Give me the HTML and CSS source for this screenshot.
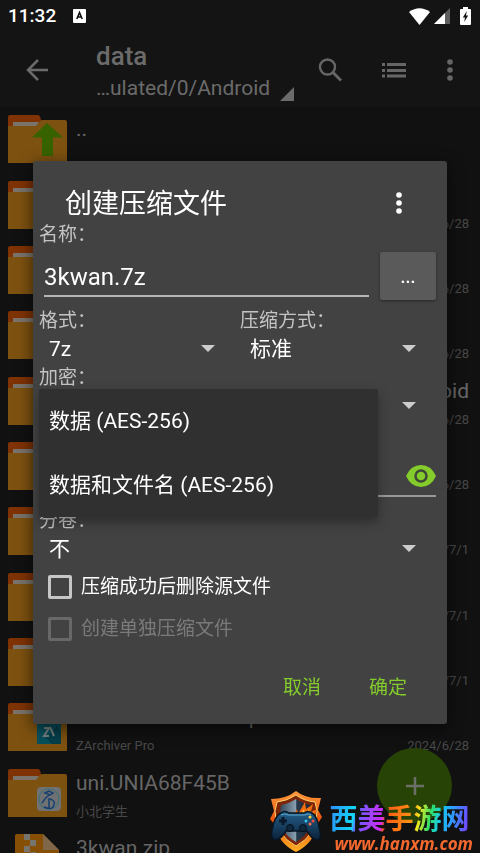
FILE: index.html
```html
<!DOCTYPE html>
<html lang="zh-CN">
<head>
  <meta charset="UTF-8">
  <meta name="viewport" content="width=device-width, initial-scale=1.0">
  <title>ZArchiver</title>
  <link rel="stylesheet" href="styles.css">
</head>
<body>

<!-- shared icon shapes -->
<svg class="defs" width="0" height="0" aria-hidden="true">
  <symbol id="folder" viewBox="0 0 59 48">
    <path d="M0 14V2a2 2 0 0 1 2-2h28q2 0 3 5l1 9z" fill="#7f3204"/>
    <path d="M5 7h26l-3 5H5z" fill="#79736b"/>
    <path d="M0 11h27q2 0 3-2l2-3q1-1 3-1h22a2 2 0 0 1 2 2v41H0z" fill="#7d5110"/>
  </symbol>
  <symbol id="dots" viewBox="0 0 6 22">
    <circle cx="3" cy="3" r="2.8"/><circle cx="3" cy="11" r="2.8"/><circle cx="3" cy="19" r="2.8"/>
  </symbol>
</svg>

<div class="screen">
  <div class="status-bar">
    <span class="clock">11:32</span>
    <svg class="badge-a" width="13" height="14" viewBox="0 0 13 14">
      <rect width="13" height="14" rx="1" fill="#fff"/>
      <path d="M3.8 10 6.5 3.6 9.2 10M4.8 8h3.4" fill="none" stroke="#111" stroke-width="1.6"/>
    </svg>
    <span class="status-icons">
      <svg width="21" height="17" viewBox="0 0 21 17"><path d="M0 4Q10.500-3.500 21 4L10.500 17z" fill="#fff"/></svg>
      <svg width="16" height="16" viewBox="0 0 16 16"><path d="M0 16 16 0v16z" fill="#5e5e5e"/><path d="M0 16 11 5v11z" fill="#fff"/></svg>
      <svg class="battery" width="11" height="18" viewBox="0 0 11 18"><path d="M3 0h5v2h2a1 1 0 0 1 1 1v14a1 1 0 0 1-1 1H1a1 1 0 0 1-1-1V3a1 1 0 0 1 1-1h2z" fill="#fff"/><path d="M6.800 4 2.800 10.500h2.200L4.200 15 8.200 8.500H6z" fill="#141414"/></svg>
    </span>
  </div>

  <header class="toolbar">
    <button class="tool back" aria-label="返回">
      <svg width="22" height="22" viewBox="0 0 22 22"><path d="M22 11H2M12 1 2 11l10 10" fill="none" stroke="#6b6b6b" stroke-width="2.500"/></svg>
    </button>
    <div class="location">
      <h1>data</h1>
      <div class="path">
        <span>…ulated/0/Android</span>
        <svg width="14" height="14" viewBox="0 0 14 14"><path d="M14 0v14H0z" fill="#6b6b6b"/></svg>
      </div>
    </div>
    <button class="tool" aria-label="搜索">
      <svg width="24" height="24" viewBox="0 0 24 24"><circle cx="9.500" cy="9" r="7.500" fill="none" stroke="#666" stroke-width="2.400"/><path d="m15 14.500 8 8" stroke="#666" stroke-width="3"/></svg>
    </button>
    <button class="tool" aria-label="视图">
      <svg width="24" height="16" viewBox="0 0 24 16" fill="#666"><path d="M0 1h3v3H0zM5 1h19v3H5zM0 7h3v3H0zM5 7h19v3H5zM0 12.500h3v3H0zM5 12.500h19v3H5z"/></svg>
    </button>
    <button class="tool more" aria-label="菜单">
      <svg width="6" height="22" fill="#666"><use href="#dots"/></svg>
    </button>
  </header>

  <main class="file-list">
    <div class="file">
      <svg class="icon" viewBox="0 0 59 48"><use href="#folder"/><path d="m39 8 16 14.500H45V41H34V22.500H24z" fill="#376200"/></svg>
      <div class="name">..</div>
    </div>
    <div class="file"><svg class="icon"><use href="#folder"/></svg><div class="date">2024/6/28</div></div>
    <div class="file"><svg class="icon"><use href="#folder"/></svg><div class="date">2024/6/28</div></div>
    <div class="file"><svg class="icon"><use href="#folder"/></svg><div class="date">2024/6/28</div></div>
    <div class="file"><svg class="icon"><use href="#folder"/></svg><div class="name end">com.android</div><div class="date">2024/6/28</div></div>
    <div class="file"><svg class="icon"><use href="#folder"/></svg><div class="date">2024/6/28</div></div>
    <div class="file"><svg class="icon"><use href="#folder"/></svg><div class="date">2024/7/1</div></div>
    <div class="file"><svg class="icon"><use href="#folder"/></svg><div class="date">2024/7/1</div></div>
    <div class="file"><svg class="icon"><use href="#folder"/></svg><div class="date">2024/7/1</div></div>
    <div class="file">
      <svg class="icon" viewBox="0 0 59 48">
        <use href="#folder"/>
        <rect x="29" y="17" width="24" height="24" fill="#07505c"/>
        <path d="m38 35 11-12 4 5v13h-9z" fill="#053e49"/>
        <path d="M36 25h5l-5 8h5M42 24l4 9" fill="none" stroke="#77807f" stroke-width="2"/>
      </svg>
      <div class="name">ru.zdevs.zarchiver.pro</div>
      <div class="info">ZArchiver Pro</div>
      <div class="date">2024/6/28</div>
    </div>
    <div class="file">
      <svg class="icon" viewBox="0 0 59 48">
        <use href="#folder"/>
        <rect x="29" y="18" width="24" height="24" rx="4" fill="#6f7173"/>
        <circle cx="41" cy="30" r="10" fill="none" stroke="#3b7073" stroke-width="1"/>
        <path d="m37 24 4-2 4 2-3 2zM41 26q-4 3-7 8m7-5v10m-5-1q7 3 9 0 4-6-3-8" fill="none" stroke="#173f72" stroke-width="1.500"/>
      </svg>
      <div class="name">uni.UNIA68F45B</div>
      <div class="info">小北学生</div>
    </div>
    <div class="file">
      <svg class="icon" viewBox="0 0 59 48">
        <path d="M7 2q0-2 2-2h26l16 16v32H7z" fill="#855005"/>
        <path d="m35 0 16 16H35z" fill="#80674a"/>
        <path d="M16 0h6v6h-6zM22 6h6v6h-6zM16 12h6v6h-6zM22 18h6v6h-6zM16 24h6v6h-6z" fill="#77736d"/>
      </svg>
      <div class="name">3kwan.zip</div>
    </div>
  </main>
</div>

<button class="fab" aria-label="新建">
  <svg width="20" height="20" viewBox="0 0 20 20"><path d="M10 1v18M1 10h18" stroke="#6c6f68" stroke-width="2.500"/></svg>
</button>

<div class="overlay">
  <form class="dialog">
    <div class="dialog-title">
      <h2>创建压缩文件</h2>
      <button type="button" class="tool more" aria-label="更多">
        <svg width="6" height="22" fill="#fff"><use href="#dots"/></svg>
      </button>
    </div>

    <label for="name">名称：</label>
    <div class="input-row">
      <input type="text" id="name" value="3kwan.7z">
      <button type="button" class="browse">...</button>
    </div>

    <div class="columns">
      <div>
        <label for="format">格式：</label>
        <div class="spinner">
          <select id="format"><option>7z</option></select>
        </div>
      </div>
      <div>
        <label for="level">压缩方式：</label>
        <div class="spinner">
          <select id="level"><option>标准</option></select>
        </div>
      </div>
    </div>

    <label for="encryption">加密：</label>
    <div class="spinner">
      <select id="encryption"><option></option></select>
      <ul class="popup" role="listbox">
        <li role="option">数据 (AES-256)</li>
        <li role="option">数据和文件名 (AES-256)</li>
      </ul>
    </div>

    <div class="password">
      <input type="password" id="password" aria-label="密码">
      <button type="button" class="eye" aria-label="显示密码">
        <svg width="30" height="22" viewBox="0 0 30 22">
          <path d="M0 11Q5 0 15 0t15 11Q25 22 15 22T0 11z" fill="#84cc2b"/>
          <circle cx="15" cy="11" r="5.500" fill="none" stroke="#3f4738" stroke-width="2.500"/>
        </svg>
      </button>
    </div>

    <label for="split">分卷：</label>
    <div class="spinner">
      <select id="split"><option>不</option></select>
    </div>

    <label class="check"><input type="checkbox">压缩成功后删除源文件</label>
    <label class="check disabled"><input type="checkbox" disabled>创建单独压缩文件</label>

    <div class="actions">
      <button type="button">取消</button>
      <button type="button">确定</button>
    </div>
  </form>
</div>

<div class="brand">
  <svg width="56" height="64" viewBox="0 0 56 64">
    <defs>
      <linearGradient id="flame" x1="0" y1="0" x2="0" y2="1"><stop offset="0" stop-color="#ff9a3c"/><stop offset=".5" stop-color="#e8500c"/><stop offset="1" stop-color="#ffb024"/></linearGradient>
      <linearGradient id="steel"><stop offset="0" stop-color="#33465a"/><stop offset=".5" stop-color="#8aa0b0"/><stop offset=".52" stop-color="#26394c"/><stop offset="1" stop-color="#152434"/></linearGradient>
      <linearGradient id="pad" x1="0" y1="0" x2="0" y2="1"><stop offset="0" stop-color="#235f8a"/><stop offset="1" stop-color="#0b2138"/></linearGradient>
    </defs>
    <path d="M28 2q-10 8-25 8l3 12-4 8 5 6q3 18 21 27 18-9 21-27l5-8-4-7 3-12Q38 10 28 2z" fill="url(#flame)"/>
    <path d="M28 6q-9 6-19 7l-2 9q0 24 21 35 21-11 21-35l-2-9Q36 12 28 6z" fill="#7c2508" stroke="#ffd36a" stroke-width="1"/>
    <path d="M28 10q-8 5-15 6-5 26 15 37 20-11 15-37-8-1-15-6z" fill="url(#steel)"/>
    <path d="m25 28 4-8 1 5 7-12 1 7 7-5-2 8 6-3-4 11H25z" fill="#f36b0e"/>
    <path d="m31 28 5-8 1 5 4-5 1 8z" fill="#ffc23c"/>
    <path d="M13 24q4-3 8 0h15q4-3 8 0 5 2 8 18 2 10-4 9-4-1-9-9H18q-5 8-10 9-6 0-4-10 3-15 9-17z" fill="url(#pad)" stroke="#071522" stroke-width="1.500"/>
    <path d="M13 26q4-2 7 0h17q4-2 6 0" fill="none" stroke="#5daad0" stroke-width="1"/>
    <path d="M15 28v8M11 32h8" stroke="#0a1a2a" stroke-width="3"/>
    <circle cx="22" cy="39" r="3.500" fill="#10283c" stroke="#04101b"/>
    <circle cx="35" cy="39" r="3.500" fill="#10283c" stroke="#04101b"/>
    <circle cx="42" cy="28" r="1.500" fill="#ffd13a"/><circle cx="38" cy="32" r="1.500" fill="#38c4f0"/>
    <circle cx="45" cy="32" r="1.500" fill="#fb4a38"/><circle cx="42" cy="35" r="1.500" fill="#ff6f4f"/>
  </svg>
  <div class="brand-text">
    <div class="brand-name">西美手游网</div>
    <div class="brand-url">www.hanxm.com</div>
  </div>
</div>

</body>
</html>
```

FILE: styles.css
```css
* {
  box-sizing: border-box;
}
html, body {
  margin: 0;
  height: 100%;
}
body {
  background: #111;
  color: #fff;
  font-family: Roboto, "Noto Sans CJK SC", sans-serif;
  overflow: hidden;
}
h1, h2, ul {
  margin: 0;
  padding: 0;
}
button, input, select {
  font-family: inherit;
  color: inherit;
  background: none;
  border: none;
  border-radius: 0;
  outline: none;
  margin: 0;
  padding: 0;
}
svg {
  display: block;
  flex-shrink: 0;
}
.defs {
  position: absolute;
}
.screen {
  height: 100vh;
  overflow: hidden;
}

/* status bar */
.status-bar {
  height: 32px;
  padding: 0 9px 0 8px;
  background: #141414;
  display: flex;
  align-items: center;
}
.clock {
  font-size: 19px;
  font-weight: 500;
  line-height: 32px;
}
.badge-a {
  margin-left: 17px;
}
.status-icons {
  margin-left: auto;
  display: flex;
  align-items: center;
  gap: 4px;
}
.battery {
  margin-left: 6px;
}

/* toolbar */
.toolbar {
  height: 75px;
  padding: 0 14px 0 13px;
  background: #141414;
  display: flex;
  align-items: center;
  gap: 16px;
}
.tool {
  width: 48px;
  height: 48px;
  display: flex;
  align-items: center;
  justify-content: center;
}
.tool.more {
  width: 32px;
}
.location {
  flex: 1;
  padding-top: 4px;
  padding-left: 19px;
  margin-right: -16px;
  line-height: 32px;
  color: #6b6b6b;
}
.location h1 {
  font-size: 26px;
  font-weight: 500;
}
.path {
  display: flex;
  align-items: flex-end;
  gap: 10px;
  font-size: 21px;
  white-space: nowrap;
}
.path svg {
  margin-bottom: 3px;
}

/* files */
.file-list {
  height: 784px;
  display: grid;
  grid-template-rows: repeat(12, 1fr);
}
.file {
  display: grid;
  grid-template-columns: 59px 1fr auto;
  grid-template-rows: 30px 28px;
  align-content: end;
  column-gap: 9px;
  padding: 0 11px 0 8px;
}
.icon {
  width: 59px;
  height: 48px;
  grid-row: 1 / 3;
  margin-top: 1px;
}
.name {
  grid-area: 1 / 2 / 2 / 4;
  font-size: 21px;
  line-height: 30px;
  color: #666;
}
.name.end {
  text-align: right;
}
.info, .date {
  font-size: 13px;
  line-height: 28px;
  color: #484848;
}
.info {
  grid-area: 2 / 2;
}
.date {
  grid-area: 2 / 3;
}

.fab {
  position: fixed;
  right: 28px;
  bottom: 30px;
  width: 75px;
  height: 75px;
  border-radius: 50%;
  background: #274406;
  display: flex;
  align-items: center;
  justify-content: center;
}

/* dialog */
.overlay {
  position: fixed;
  inset: 0;
  padding: 32px 33px 0;
  display: flex;
  align-items: center;
}
.dialog {
  flex: 1;
  padding: 22px 6px 15px;
  background: #424242;
  border-radius: 3px;
  box-shadow: 0 4px 16px rgba(0, 0, 0, 0.6);
}
.dialog label {
  display: block;
  padding-top: 2px;
  font-size: 19px;
  line-height: 20px;
  color: #c4c4c4;
}
.dialog-title {
  height: 40px;
  padding: 0 26px;
  display: flex;
  align-items: center;
  justify-content: space-between;
}
.dialog-title h2 {
  padding-top: 2px;
  font-size: 27px;
  font-weight: 400;
  line-height: 40px;
}
.input-row {
  height: 64px;
  padding: 7px 5px 9px;
  display: flex;
  gap: 11px;
}
.input-row input {
  flex: 1;
  min-width: 0;
  height: 45px;
  padding-top: 6px;
  border-bottom: 2px solid #b4b6b6;
  font-size: 24px;
}
.browse {
  width: 56px;
  height: 48px;
  border-radius: 2px;
  background: #5a5a5b;
  box-shadow: 0 1px 3px rgba(0, 0, 0, 0.4);
  font-size: 18px;
  font-weight: 500;
}
.columns {
  display: grid;
  grid-template-columns: 1fr 1fr;
}
.spinner {
  position: relative;
  display: grid;
  align-items: center;
}
.spinner select {
  grid-area: 1 / 1;
  appearance: none;
  height: 35px;
  padding-left: 10px;
  font-size: 21px;
}
.spinner::after {
  content: "";
  grid-area: 1 / 1;
  justify-self: end;
  margin-right: 25px;
  border: 7px solid transparent;
  border-top-color: #ccc;
  border-bottom: none;
  pointer-events: none;
}
.popup {
  position: absolute;
  z-index: 1;
  top: 1px;
  left: 0;
  right: 63px;
  list-style: none;
  background: #303030;
  border-radius: 2px;
  box-shadow: 0 5px 12px rgba(0, 0, 0, 0.35);
}
.popup li {
  padding-left: 10px;
  font-size: 21px;
  line-height: 64px;
}
.password {
  height: 86px;
  padding: 32px 5px 0;
  display: grid;
}
.password input {
  grid-area: 1 / 1;
  height: 42px;
  padding-right: 40px;
  border-bottom: 2px solid #999;
}
.eye {
  grid-area: 1 / 1;
  justify-self: end;
  height: 42px;
}
.dialog .check {
  height: 42px;
  padding: 0 0 0 9px;
  display: flex;
  align-items: center;
  gap: 9px;
  color: #fff;
}
.check input {
  appearance: none;
  width: 24px;
  height: 24px;
  border: 3px solid #c6c6c6;
  border-radius: 2px;
}
.dialog .check.disabled {
  color: #7a7a7a;
}
.check.disabled input {
  border-color: #686868;
}
.actions {
  padding: 11px 14px 0 0;
  display: flex;
  justify-content: flex-end;
  gap: 8px;
}
.actions button {
  width: 78px;
  height: 48px;
  font-size: 19px;
  color: #84cc2b;
}

/* site mark */
.brand {
  position: fixed;
  right: 7px;
  bottom: 0;
  display: flex;
  align-items: flex-end;
  gap: 6px;
}
.brand-name {
  font-family: "Noto Sans CJK SC", sans-serif;
  font-size: 28px;
  font-weight: 700;
  line-height: 36px;
  color: transparent;
  background: linear-gradient(100deg, #2d8cff 0, #12d8f5 26px, #6a5cff 30px, #d02cf5 54px, #ff5a14 58px, #ff9414 84px, #f4e81c 90px, #2ee06a 102px, #18c8f0 112px, #2aa0ff 122px, #7a3cff 142px);
  background-clip: text;
  -webkit-background-clip: text;
}
.brand-url {
  padding-left: 5px;
  font-family: "Open Sans", sans-serif;
  font-size: 17px;
  font-weight: 700;
  font-style: italic;
  line-height: 18px;
  color: #f4692e;
}
```
